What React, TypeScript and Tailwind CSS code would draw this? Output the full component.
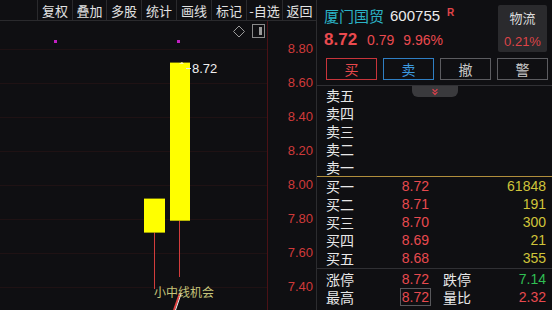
import React from 'react';
import { ChevronsDown } from 'lucide-react';

const tools = [
  { label: '复权', w: 'w-[35px]' },
  { label: '叠加', w: 'w-[34px]' },
  { label: '多股', w: 'w-[35px]' },
  { label: '统计', w: 'w-[35px]' },
  { label: '画线', w: 'w-[35px]' },
  { label: '标记', w: 'w-[35px]' },
  { label: '-自选', w: 'w-[36px]' },
  { label: '返回', w: 'w-[33px]' },
];

const axis = ['8.80', '8.60', '8.40', '8.20', '8.00', '7.80', '7.60', '7.40'];

const sells = ['卖五', '卖四', '卖三', '卖二', '卖一'];
const buys = [
  { label: '买一', price: '8.72', vol: '61848' },
  { label: '买二', price: '8.71', vol: '191' },
  { label: '买三', price: '8.70', vol: '300' },
  { label: '买四', price: '8.69', vol: '21' },
  { label: '买五', price: '8.68', vol: '355' },
];

// chart y (inside svg, which starts at page y 21)
const py = (p: number) => 28 + (8.8 - p) * 170;

function Chart() {
  return (
    <svg width="267" height="289" className="block shrink-0">
      {axis.map((a) => (
        <line key={a} x1="0" x2="267" y1={py(parseFloat(a)) + 0.5} y2={py(parseFloat(a)) + 0.5} stroke="#1f1214" strokeWidth="1" />
      ))}
      {/* top right icons */}
      <path d="M239 5 L244.5 10.5 L239 16 L233.5 10.5 Z" fill="none" stroke="#9a9a9a" strokeWidth="1" />
      <rect x="252.5" y="3.5" width="12" height="13" fill="none" stroke="#8a8a8a" strokeWidth="1" />
      <rect x="259" y="6" width="3" height="8" fill="#9a9a9a" />
      {/* markers */}
      <rect x="54" y="19" width="3" height="3" fill="#c21fc2" />
      <rect x="177" y="19" width="3" height="3" fill="#c21fc2" />
      {/* wicks */}
      <line x1="154.5" x2="154.5" y1={py(7.72)} y2="268" stroke="#d23c3c" strokeWidth="1" />
      <line x1="179.5" x2="179.5" y1={py(7.79)} y2="256" stroke="#d23c3c" strokeWidth="1" />
      {/* bodies */}
      <rect x="144" y={py(7.92)} width="21" height={py(7.72) - py(7.92)} fill="#ffff00" />
      <rect x="170" y={py(8.72)} width="20" height={py(7.79) - py(8.72)} fill="#ffff00" />
      <path d="M179 43 L182 41 L184 43 Z" fill="#fffbb0" />
      <line x1="186" x2="191" y1="47.5" y2="47.5" stroke="#e8e8e8" strokeWidth="1" />
      <text x="192" y="52" fill="#f0f0f0" fontSize="13" fontFamily="'Liberation Sans', sans-serif">8.72</text>
      {/* bottom signal */}
      <line x1="180" x2="174" y1="272" y2="289" stroke="#e04040" strokeWidth="2" />
      <line x1="181" x2="175.5" y1="273" y2="289" stroke="#f4f4f4" strokeWidth="1" />
      <text x="154" y="276" fill="#c6c47a" fontSize="12" fontFamily="'Noto Sans CJK SC', sans-serif">小中线机会</text>
    </svg>
  );
}

export default function App() {
  return (
    <div className="w-[552px] h-[310px] bg-[#0f0f12] flex overflow-hidden text-[#e6e6e6] font-['Liberation_Sans','Noto_Sans_CJK_SC',sans-serif]">
      {/* left: toolbar + chart */}
      <div className="w-[317px] shrink-0 flex flex-col border-r border-[#2c2c2f]">
        <div className="h-[21px] flex border-b border-[#2a2a2d]">
          <div className="w-[38px] border-r border-[#2a2a2d]" />
          {tools.map((t, i) => (
            <div
              key={t.label}
              className={`${t.w} ${i < tools.length - 1 ? 'border-r border-[#2a2a2d]' : ''} flex items-center justify-center text-[13px] leading-none text-[#e2e2e2] font-['Noto_Sans_CJK_SC',sans-serif]`}
            >
              {t.label}
            </div>
          ))}
        </div>
        <div className="flex flex-1">
          <Chart />
          <div className="w-px bg-[#4a1216]" />
          <div className="flex-1 flex flex-col items-end pr-[3px] pt-[11px]">
            {axis.map((a) => (
              <div key={a} className="h-[34px] leading-[34px] text-[13px] text-[#cf3a3a]">
                {a}
              </div>
            ))}
          </div>
        </div>
      </div>

      {/* right: quote panel */}
      <div className="flex-1 flex flex-col relative">
        <div className="h-[58px] flex">
          <div className="flex-1 pl-[7px] pt-[6px]">
            <div className="h-[20px] leading-[20px] flex items-start">
              <span className="text-[15px] text-[#2bb3c6] font-['Noto_Sans_CJK_SC',sans-serif]">厦门国贸</span>
              <span className="text-[15px] text-[#ececec] ml-[6px]">600755</span>
              <span className="text-[10px] font-bold text-[#e0454a] ml-[7px] leading-[14px]">R</span>
            </div>
            <div className="h-[28px] leading-[28px] flex items-baseline text-[#ea4a4f]">
              <span className="text-[17px] font-bold">8.72</span>
              <span className="text-[14px] ml-[10px]">0.79</span>
              <span className="text-[14px] ml-[9px]">9.96%</span>
            </div>
          </div>
          <div className="w-[49px] h-[47px] mt-[5px] mr-[5px] bg-[#2a2a2d] rounded-[2px] flex flex-col items-center">
            <div className="text-[13px] leading-[13px] mt-[6px] text-[#dcdcdc] font-['Noto_Sans_CJK_SC',sans-serif]">物流</div>
            <div className="text-[13px] leading-[13px] mt-[11px] text-[#dd4448]">0.21%</div>
          </div>
        </div>

        <div className="h-[22px] flex gap-[6px] pl-[9px] text-[14px] font-['Noto_Sans_CJK_SC',sans-serif]">
          <div className="w-[51px] border border-[#c8343a] text-[#e8484c] flex items-center justify-center">买</div>
          <div className="w-[51px] border border-[#2f7fc4] text-[#3c9ae0] flex items-center justify-center">卖</div>
          <div className="w-[51px] border border-[#5c5c60] text-[#c8c8c8] flex items-center justify-center">撤</div>
          <div className="w-[51px] border border-[#5c5c60] text-[#c8c8c8] flex items-center justify-center">警</div>
        </div>

        <div className="mt-[5px] border-t border-[#303034]" />
        <div className="absolute top-[86px] left-[95px] w-[46px] h-[11px] bg-[#3a3a3d] rounded-b-[6px] flex items-center justify-center">
          <ChevronsDown size={10} strokeWidth={3} className="text-[#d8404a]" />
        </div>

        <div className="flex flex-col">
          {sells.map((s) => (
            <div key={s} className="h-[18px] leading-[18px] pl-[9px] text-[14px] text-[#e8e8e8] font-['Noto_Sans_CJK_SC',sans-serif]">
              {s}
            </div>
          ))}
        </div>
        <div className="border-t border-[#b08e3c]" />

        <div className="flex flex-col">
          {buys.map((b) => (
            <div key={b.label} className="h-[18px] leading-[18px] flex pl-[9px] pr-[6px] text-[14px]">
              <span className="w-[60px] text-[#e8e8e8] font-['Noto_Sans_CJK_SC',sans-serif]">{b.label}</span>
              <span className="w-[43px] text-right text-[#e84a4f]">{b.price}</span>
              <span className="flex-1 text-right text-[#cfc43a]">{b.vol}</span>
            </div>
          ))}
        </div>
        <div className="mt-px border-t border-[#303034]" />

        <div className="flex flex-col pt-px text-[14px]">
          <div className="h-[18px] leading-[18px] flex pl-[9px] pr-[6px]">
            <span className="w-[60px] text-[#e8e8e8] font-['Noto_Sans_CJK_SC',sans-serif]">涨停</span>
            <span className="w-[43px] text-right text-[#e84a4f]">8.72</span>
            <span className="ml-[14px] text-[#e8e8e8] font-['Noto_Sans_CJK_SC',sans-serif]">跌停</span>
            <span className="flex-1 text-right text-[#2fbf52]">7.14</span>
          </div>
          <div className="h-[18px] leading-[18px] flex pl-[9px] pr-[6px]">
            <span className="w-[60px] text-[#e8e8e8] font-['Noto_Sans_CJK_SC',sans-serif]">最高</span>
            <span className="w-[45px] -mr-[2px] flex justify-end">
              <span className="border border-[#58585c] px-px leading-[17px] text-[#e84a4f]">8.72</span>
            </span>
            <span className="ml-[14px] text-[#e8e8e8] font-['Noto_Sans_CJK_SC',sans-serif]">量比</span>
            <span className="flex-1 text-right text-[#e84a4f]">2.32</span>
          </div>
        </div>
      </div>
    </div>
  );
}
